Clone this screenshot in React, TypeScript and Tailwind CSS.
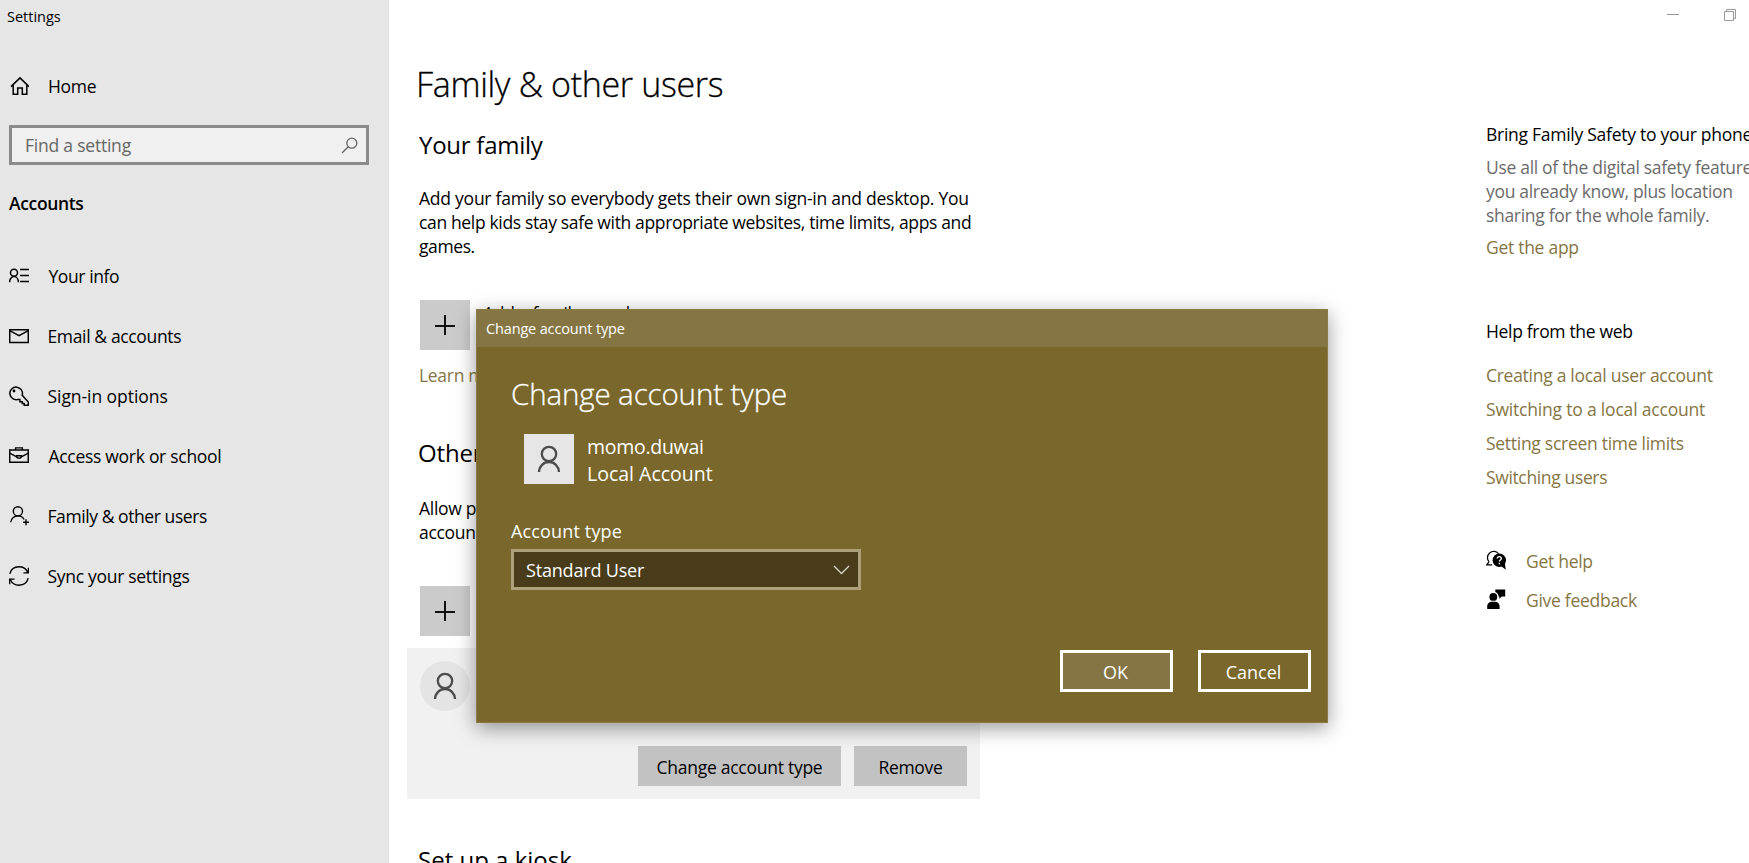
import type { ReactNode } from "react";

function Icon({ children, className = "" }: { children: ReactNode; className?: string }) {
  return (
    <svg
      width="20"
      height="20"
      viewBox="0 0 20 20"
      fill="none"
      stroke="currentColor"
      strokeWidth="1.4"
      className={`shrink-0 ${className}`}
    >
      {children}
    </svg>
  );
}

const HomeIcon = () => (
  <Icon>
    <path d="M2 10.6 11 1.9l9 8.7M4.2 9v9.3h4.5v-6.2h4.6v6.2h4.5V9" strokeWidth="1.5" />
  </Icon>
);

const InfoIcon = () => (
  <Icon>
    <circle cx="5" cy="6.8" r="3.5" strokeWidth="1.5" />
    <path d="M.6 16.2c0-3.2 2-5.6 4.4-5.6s4.4 2.4 4.4 5.6" strokeWidth="1.5" />
    <path d="M11 3.5h9M11 9.5h9M11 15.5h9" />
  </Icon>
);

const MailIcon = () => (
  <Icon>
    <path d="M.7 3.8h18.6v12.6H.7z" strokeWidth="1.5" />
    <path d="m.7 4.6 9.3 5 9.3-5" />
  </Icon>
);

const KeyIcon = () => (
  <Icon>
    <path d="M13.2 9.2a6.3 6.3 0 1 0-4.1 4.2l1.8.1v2.2h2.4v1.8h1.9v1.8h4.1v-3.2z" strokeWidth="1.5" />
    <circle cx="5" cy="5" r="1.4" fill="currentColor" stroke="none" />
  </Icon>
);

const BriefcaseIcon = () => (
  <Icon>
    <path d="M.7 4h18.6v12.3H.7z" strokeWidth="1.5" />
    <path d="M6.6 4V1.9h6.8V4M.7 7.2l7 3.6M12.3 10.8l7-3.6M7.8 9.7h4.4v1.1c0 1-.8 1.3-2.2 1.3s-2.2-.3-2.2-1.3z" />
  </Icon>
);

const PersonAddIcon = () => (
  <Icon>
    <circle cx="8.9" cy="5.3" r="4.6" />
    <path d="M1.7 16.2c.3-3.6 3.4-6.3 7.2-6.3 2.7 0 5.1 1.5 6.2 3.6M17 13.3v6M14 16.3h6" />
  </Icon>
);

const SyncIcon = () => (
  <Icon>
    <path d="M.8 7.8C1.9 3.5 5.6.8 10 .8c3.9 0 7.2 2.2 8.6 5.4M19.4 1.8v5.1h-5M19.2 12.2C18.1 16.5 14.4 19.2 10 19.2c-3.9 0-7.2-2.2-8.6-5.4M.6 18.2v-5.1h5" />
  </Icon>
);

function PersonGlyph() {
  return (
    <svg width="26" height="30" viewBox="0 0 26 30" fill="none" stroke="#4c4c4c" strokeWidth="2.3">
      <circle cx="13" cy="10" r="7.2" />
      <path d="M3 28c.3-5.800 4.600-10 10-10s9.700 4.200 10 10" />
    </svg>
  );
}

function PlusTile() {
  return (
    <div className="flex size-[50px] shrink-0 items-center justify-center bg-[#cbcbcb]">
      <svg width="20" height="20" viewBox="0 0 20 20" stroke="#111" strokeWidth="2">
        <path d="M10 0v20M0 11h20" />
      </svg>
    </div>
  );
}

const nav = [
  { label: "Your info", icon: <InfoIcon />, text: "tracking-[-0.42px] pl-[1px]" },
  { label: "Email & accounts", icon: <MailIcon />, text: "tracking-[-0.36px]" },
  { label: "Sign-in options", icon: <KeyIcon />, text: "tracking-[-0.06px]" },
  { label: "Access work or school", icon: <BriefcaseIcon />, text: "tracking-[-0.29px] pl-[1px]" },
  { label: "Family & other users", icon: <PersonAddIcon />, text: "tracking-[-0.42px]" },
  { label: "Sync your settings", icon: <SyncIcon />, text: "tracking-[-0.3px]" },
];

function Sidebar() {
  return (
    <aside className="flex w-[389px] shrink-0 flex-col bg-[#e6e6e6]">
      <div className="mt-px pl-[7px] text-[14.5px] leading-8">Settings</div>
      <a className="mt-[33px] flex h-10 items-center gap-[19px] pl-[9px] tracking-[-0.3px]">
        <HomeIcon />
        Home
      </a>
      <div className="mt-[19px] ml-[9px] flex h-10 w-[360px] items-center justify-between border-[3px] border-[#8a8a8a] bg-[#f0f0f0] pr-[8px] pl-[13px] text-[#666]">
        <span className="tracking-[-0.22px]">Find a setting</span>
        <svg width="17" height="17" viewBox="0 0 17 17" fill="none" stroke="#666" strokeWidth="1.3">
          <circle cx="10.8" cy="6.2" r="5" />
          <path d="M7.2 9.8 1 16" />
        </svg>
      </div>
      <div className="mt-[26px] pl-[9px] font-semibold tracking-[-0.35px]">Accounts</div>
      <nav className="mt-[31px] flex flex-col">
        {nav.map((item) => (
          <a key={item.label} className="flex h-[60px] items-center gap-[18.5px] pl-[9px]">
            {item.icon}
            <span className={item.text}>{item.label}</span>
          </a>
        ))}
      </nav>
    </aside>
  );
}

function Content() {
  return (
    <main className="flex w-[1097px] shrink-0 flex-col overflow-hidden pt-[60px] pl-[30px] whitespace-nowrap">
      <h1 className="-ml-[3px] text-[34px] leading-[48px] font-light tracking-[-0.33px] [-webkit-text-stroke:0.3px_black]">
        Family &amp; other users
      </h1>
      <h2 className="mt-[21px] text-[24px] leading-8 tracking-[-0.25px]">Your family</h2>
      <p className="mt-[25px]">
        <span className="block tracking-[-0.24px]">Add your family so everybody gets their own sign-in and desktop. You</span>
        <span className="block tracking-[-0.35px]">can help kids stay safe with appropriate websites, time limits, apps and</span>
        <span className="block tracking-[-0.4px]">games.</span>
      </p>
      <div className="mt-[42px] ml-px flex gap-[13px]">
        <PlusTile />
        <span className="leading-[26px] tracking-[-0.3px]">Add a family member</span>
      </div>
      <a className="mt-[13px] tracking-[-0.3px] text-[#857544]">Learn more</a>
      <h2 className="mt-[50px] -ml-px text-[24px] leading-8 tracking-[-0.17px]">Other users</h2>
      <p className="mt-[27px] tracking-[-0.3px]">
        <span className="block">Allow people who are not part of your family to sign in with their own</span>
        <span className="block">accounts. This won't add them to your family.</span>
      </p>
      <div className="mt-[42px] ml-px flex">
        <PlusTile />
      </div>
      <section className="mt-[12px] -ml-[12px] flex h-[151px] w-[573px] shrink-0 flex-col justify-between bg-[#f1f1f1] p-[13px]">
        <div className="flex size-[50px] items-center justify-center rounded-full bg-[#e4e4e4]">
          <PersonGlyph />
        </div>
        <div className="flex justify-end gap-[13px]">
          <button className="h-10 w-[203px] bg-[#c2c2c2] pt-px tracking-[-0.27px]">Change account type</button>
          <button className="h-10 w-[113px] bg-[#c2c2c2] pt-px tracking-[-0.32px]">Remove</button>
        </div>
      </section>
      <h2 className="mt-[45px] -ml-px text-[24px] leading-8">Set up a kiosk</h2>
    </main>
  );
}

const links = [
  { label: "Creating a local user account", text: "tracking-[-0.28px]" },
  { label: "Switching to a local account", text: "tracking-[-0.19px]" },
  { label: "Setting screen time limits", text: "tracking-[-0.28px]" },
  { label: "Switching users", text: "tracking-[-0.36px]" },
];

function RelatedPane() {
  return (
    <aside className="flex w-[263px] shrink-0 flex-col overflow-hidden whitespace-nowrap">
      <div className="flex h-[122px] gap-[45px] pt-[9px] pl-[181px]">
        <svg width="12" height="12" viewBox="0 0 12 12" stroke="#999">
          <path d="M0 5.5h12" />
        </svg>
        <svg width="12" height="12" viewBox="0 0 12 12" fill="none" stroke="#999">
          <path d="M.5 2.5h9v9h-9zM2.5 2.5v-2h9v9h-2" />
        </svg>
      </div>
      <h3 className="tracking-[-0.27px]">Bring Family Safety to your phone</h3>
      <p className="mt-[9px] tracking-[-0.31px] text-[#6b6b6b]">
        Use all of the digital safety features
        <br />
        you already know, plus location
        <br />
        sharing for the whole family.
      </p>
      <a className="mt-2 tracking-[-0.28px] text-[#857544]">Get the app</a>
      <h3 className="mt-[60px] tracking-[-0.33px]">Help from the web</h3>
      <div className="mt-[15px] flex flex-col text-[#857544]">
        {links.map((l) => (
          <a key={l.label} className={`leading-[34px] ${l.text}`}>
            {l.label}
          </a>
        ))}
      </div>
      <div className="mt-[55px] flex flex-col gap-[15px] text-[#857544]">
        <a className="flex h-6 items-center gap-5 tracking-[-0.28px]">
          <Icon className="mb-[2px] text-black">
            <path d="M3 11.8A6 6 0 1 1 12.5 3.6M3 11.8.8 14.8h5.4" strokeWidth="1.3" />
            <circle cx="13.3" cy="10.3" r="6.7" fill="currentColor" stroke="none" />
            <path d="m15 16 4.8 3.8-1-6.3z" fill="currentColor" stroke="none" />
            <path d="M11.3 8.6c0-1.3.9-2 2-2s2 .8 2 1.8c0 1.5-1.9 1.6-1.9 3.2M13.4 12.8v1.5" stroke="#fff" />
          </Icon>
          Get help
        </a>
        <a className="flex h-6 items-center gap-5 tracking-[-0.28px]">
          <Icon className="mb-[2px] text-black">
            <g fill="currentColor" stroke="none">
              <circle cx="7.3" cy="7.9" r="3.9" />
              <path d="M1.2 20v-2.3c0-3 2.2-4.9 4.6-4.9h3.2c2.400 0 4.600 1.900 4.600 4.900V20zM9.300.4h9.900v7h-3.400l-2.500 2.400V7.400h-.8C12.500 5.300 11.300 3.600 9.300 3z" />
            </g>
          </Icon>
          Give feedback
        </a>
      </div>
    </aside>
  );
}

function AccountTypeDialog() {
  return (
    <div className="absolute top-[309px] left-[476px] flex h-[414px] w-[852px] flex-col border border-[#8a7a45] bg-[#79672b] text-white shadow-[0_5px_19px_rgba(0,0,0,0.4)]">
      <div className="h-[37px] bg-[#847543] pl-[9px] text-[14.5px] leading-[38px] tracking-[-0.15px]">
        Change account type
      </div>
      <div className="flex flex-1 flex-col pl-[34px]">
        <h1 className="mt-[25px] text-[29.5px] leading-[44px] font-light tracking-[-0.12px] [-webkit-text-stroke:0.3px_white]">
          Change account type
        </h1>
        <div className="mt-[18px] ml-[13px] flex gap-[13px]">
          <div className="flex size-[50px] items-center justify-center bg-[#e6e6e6]">
            <PersonGlyph />
          </div>
          <div className="-mt-[1px] text-[19.5px] leading-[27px]">
            <div className="tracking-[-0.28px]">momo.duwai</div>
            <div>Local Account</div>
          </div>
        </div>
        <div className="mt-[32px] text-[18px] tracking-[0.15px]">Account type</div>
        <div className="mt-[6px] flex h-[41px] w-[350px] items-center justify-between border-[3px] border-[#ada07a] bg-[#483c1a] pr-[8px] pl-[12px] text-[18px] tracking-[-0.18px]">
          Standard User
          <svg width="17" height="10" viewBox="0 0 17 10" fill="none" stroke="#d9d5c8" strokeWidth="1.3">
            <path d="m1 1 7.5 7.5L16 1" />
          </svg>
        </div>
        <div className="mt-[60px] flex justify-end gap-[25px] pr-[16px] text-[18px]">
          <button className="h-[42px] w-[113px] border-[3px] border-white bg-[#857544] pt-px pr-[2px]">OK</button>
          <button className="h-[42px] w-[113px] border-[3px] border-white pt-px pr-[2px]">Cancel</button>
        </div>
      </div>
    </div>
  );
}

export default function App() {
  return (
    <div className="relative flex h-[863px] w-[1749px] overflow-hidden bg-white font-['Open_Sans','Noto_Sans',sans-serif] text-[17.5px] leading-[24px] text-black">
      <Sidebar />
      <Content />
      <RelatedPane />
      <AccountTypeDialog />
    </div>
  );
}
